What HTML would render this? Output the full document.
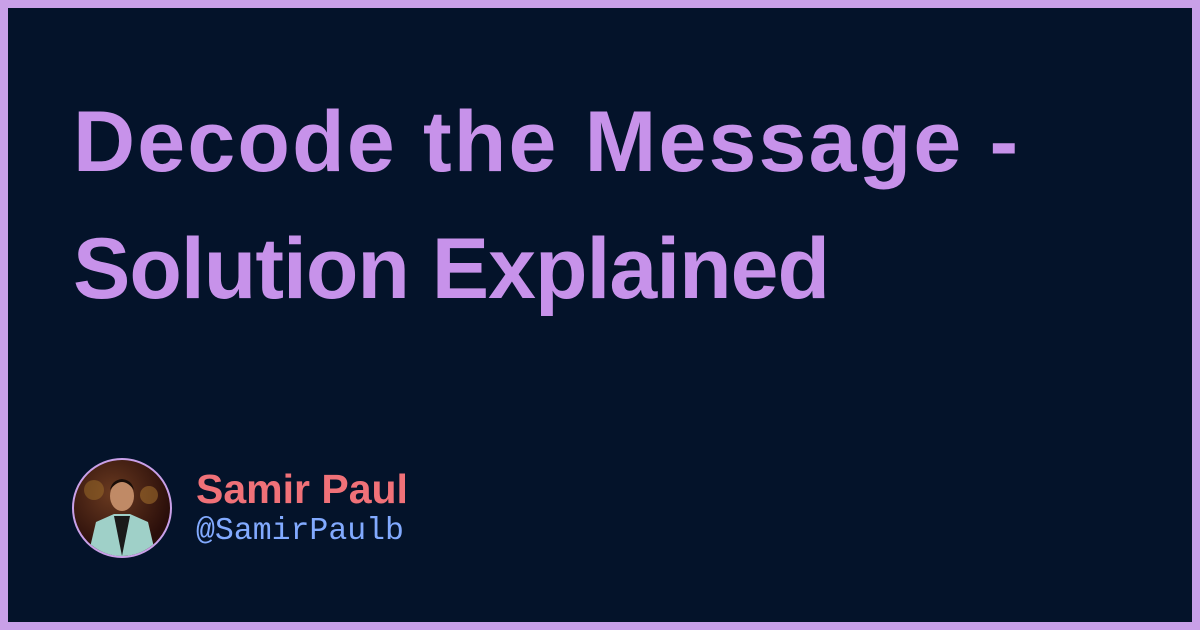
<!DOCTYPE html>
<html><head><meta charset="utf-8"><style>
html,body{margin:0;padding:0}
body{width:1200px;height:630px;overflow:hidden;background:#c9a0e8}
.frame{position:absolute;left:8px;top:8px;width:1184px;height:614px;background:#04132a}
h1{position:absolute;left:73px;top:79px;margin:0;font-family:"Liberation Sans",sans-serif;font-weight:bold;font-size:86px;line-height:127px;color:#c792ea;letter-spacing:2.2px;width:1100px}
.l2{letter-spacing:-1px}
.av{position:absolute;left:72px;top:458px;width:96px;height:96px;border-radius:50%;border:2px solid #c9a0e8;overflow:hidden;background:radial-gradient(circle at 40% 35%,#6a3a20,#2a0e0a 70%)}
.name{position:absolute;left:196px;top:466px;font-family:"Liberation Sans",sans-serif;font-weight:bold;font-size:41px;color:#f07178;line-height:46px}
.handle{position:absolute;left:196px;top:514px;font-family:"Liberation Mono",monospace;font-size:31.5px;color:#82aaff;line-height:36px}
</style></head><body>
<div class="frame"></div>
<h1>Decode the Message -<br><span class="l2">Solution Explained</span></h1>
<div class="av"><svg width="96" height="96" viewBox="0 0 96 96">
<circle cx="20" cy="30" r="10" fill="#a0702a" opacity=".5"/><circle cx="75" cy="35" r="9" fill="#b07a30" opacity=".5"/>
<path d="M14 96 L22 62 L40 54 L56 54 L74 62 L82 96Z" fill="#9fd0c8"/>
<path d="M40 56 L48 96 L56 56Z" fill="#1a1a1a"/>
<ellipse cx="48" cy="36" rx="12" ry="15" fill="#c08a66"/>
<path d="M36 30 Q48 14 60 30 Q58 20 48 19 Q38 20 36 30Z" fill="#1a0e08"/>
</svg></div>
<div class="name">Samir Paul</div>
<div class="handle">@SamirPaulb</div>
</body></html>
